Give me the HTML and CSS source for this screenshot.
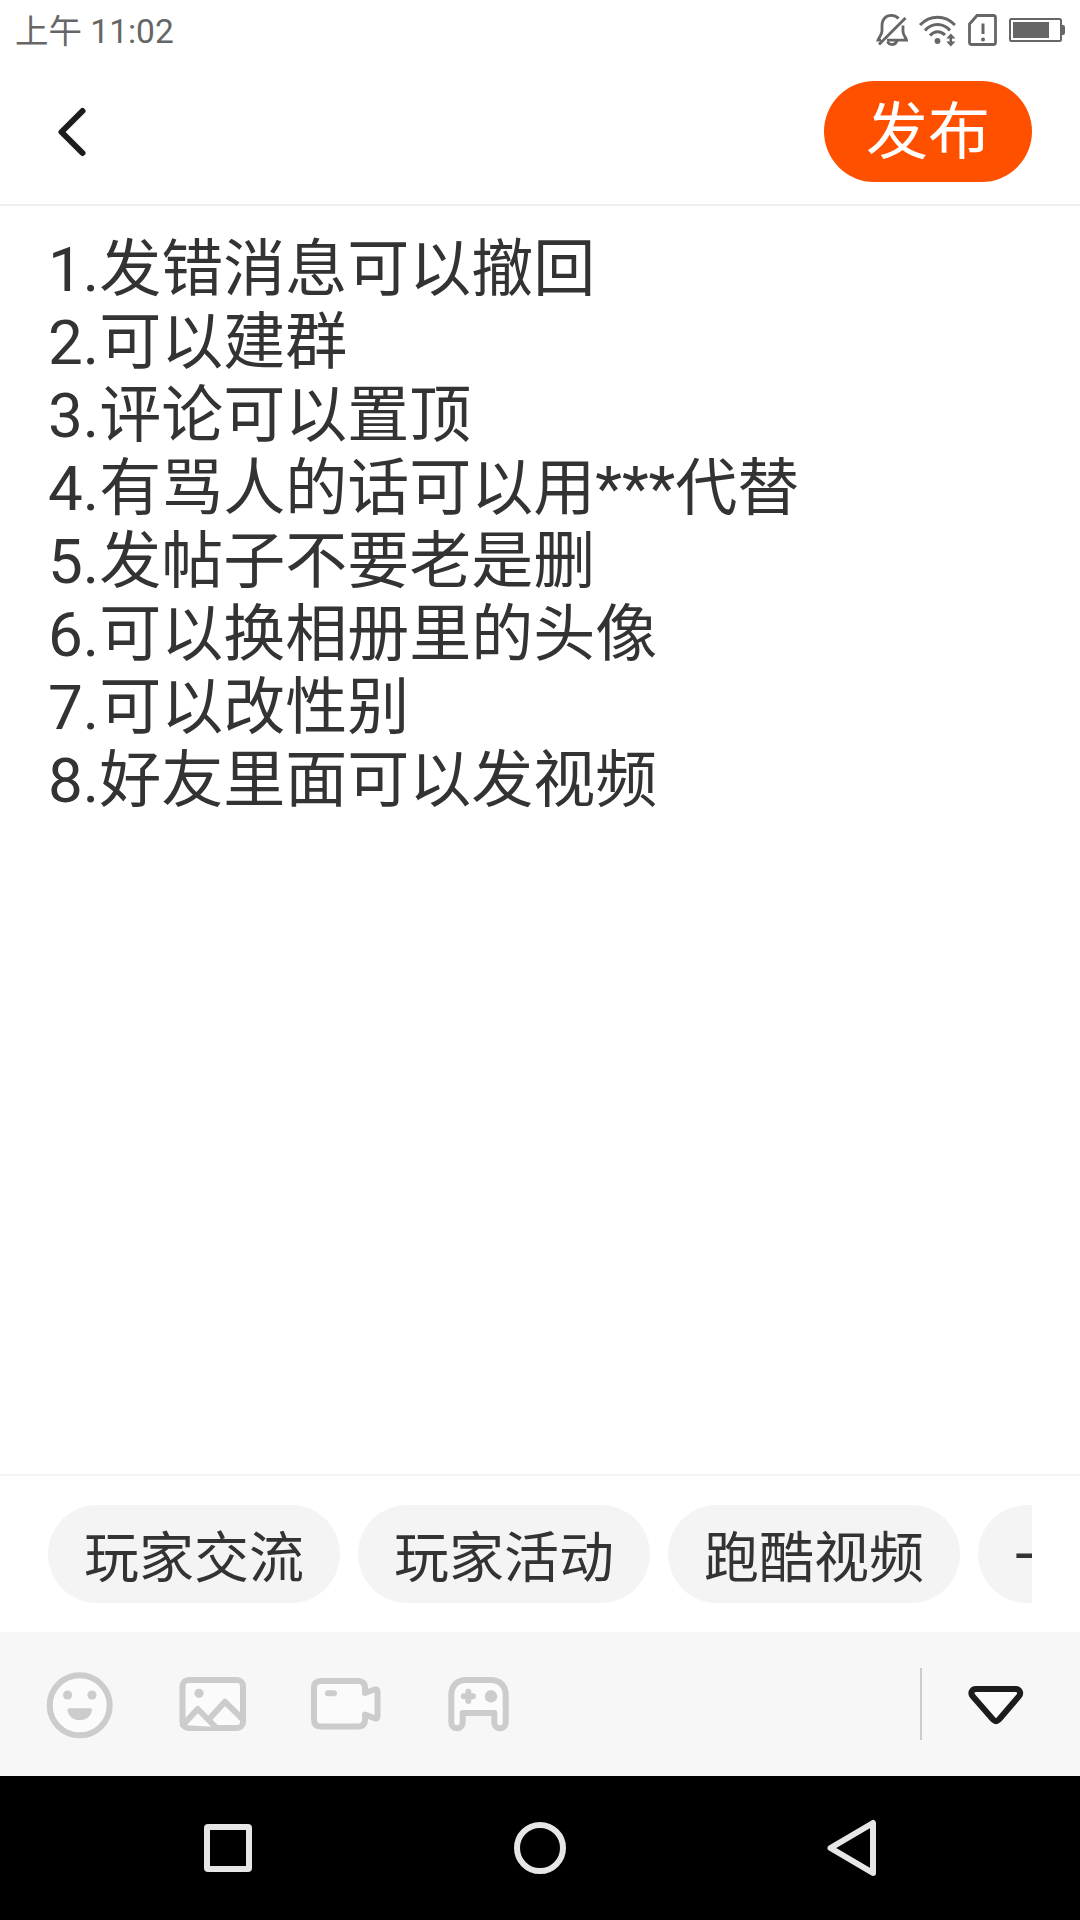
FILE: index.html
```html
<!DOCTYPE html>
<html lang="zh-CN">
<head>
  <meta charset="UTF-8" />
  <meta name="viewport" content="width=device-width, initial-scale=1.0"/>
  <title>发布</title>
  <link rel="stylesheet" href="styles.css">
</head>
<body>
  <div class="page">
    <div class="status-bar">
      <span class="time">上午 11:02</span>
      <div class="status-icons">
        <svg width="32" height="34" viewBox="0 0 32 34" fill="none" stroke="#666" stroke-width="2.8">
          <path d="M22.500 5.500C20 2.600 18.500 2.400 15.500 2.400 9.500 2.400 6 6.500 6 12.500V18c0 4-3 6-4 9.200h3M27 12.500v6c0 4 3 5.500 3.500 8.700H11"/>
          <path d="M3 31.500 29.500 5"/>
          <path d="M11.500 28.500c2 4.200 8 4.200 9.500-1"/>
        </svg>
        <svg class="wifi" width="38" height="34" viewBox="0 0 38 34" fill="none" stroke="#666" stroke-width="3">
          <path d="M2 12C12 1.500 27 1.500 37 12M7 17.500C14 9.500 25 9.500 32 17.500M12 22.500c4.500-5 10.500-5 15-.5"/>
          <circle cx="19.500" cy="28" r="2.900" fill="#666" stroke="none"/>
          <path d="M32.800 24v6.500" stroke-width="2.600"/>
          <path d="M28.200 25.500 32.800 20.500 37.500 25.500ZM28.200 28.500 32.800 33.500 37.500 28.500Z" fill="#666" stroke="none"/>
        </svg>
        <svg class="sim" width="29" height="34" viewBox="0 0 29 34" fill="none" stroke="#666" stroke-width="2.800">
          <path d="M9 2.500H25.500Q27.500 2.500 27.500 5V29.500Q27.500 31.500 25.500 31.500H3.500Q1.500 31.500 1.500 29.500V11Z"/>
          <path d="M15 10.500V21" stroke-width="3"/>
          <circle cx="15" cy="26.500" r="2" fill="#666" stroke="none"/>
        </svg>
        <svg class="battery" width="56" height="34" viewBox="0 0 56 34">
          <rect x="1" y="6" width="51" height="22" rx="1.500" fill="none" stroke="#666" stroke-width="2"/>
          <path d="M4 9H40V25H4ZM52 12h2q2 0 2 2v6q0 2-2 2h-2Z" fill="#666"/>
        </svg>
      </div>
    </div>

    <div class="header">
      <svg class="back" width="36" height="54" viewBox="0 0 36 54" fill="none" stroke="#1c1c1c" stroke-width="6" stroke-linecap="round" stroke-linejoin="round">
        <path d="M27.500 6 6.500 27 27.500 48"/>
      </svg>
      <button class="publish">发布</button>
    </div>

    <div class="content">
      <p>1.发错消息可以撤回</p>
      <p>2.可以建群</p>
      <p>3.评论可以置顶</p>
      <p>4.有骂人的话可以用***代替</p>
      <p>5.发帖子不要老是删</p>
      <p>6.可以换相册里的头像</p>
      <p>7.可以改性别</p>
      <p>8.好友里面可以发视频</p>
    </div>

    <div class="topics">
      <div class="topic-list">
        <span class="topic">玩家交流</span>
        <span class="topic">玩家活动</span>
        <span class="topic">跑酷视频</span>
        <span class="topic">一</span>
      </div>
    </div>

    <div class="toolbar">
      <div class="tools">
        <!-- emoji -->
        <svg class="tool" viewBox="0 0 72 72">
          <circle cx="35.700" cy="37.300" r="30"/>
          <g class="solid">
            <circle cx="23.600" cy="27" r="4.600"/>
            <circle cx="48" cy="27" r="4.600"/>
            <path d="M25.500 40.300H46q2 0 2 2C47 48.500 42 52.300 35.700 52.300S24.500 48.500 23.500 42.300q0-2 2-2Z"/>
          </g>
        </svg>
        <!-- picture -->
        <svg class="tool" viewBox="0 0 72 72">
          <rect x="5.500" y="12" width="60.500" height="48" rx="6"/>
          <path d="M6 57 20.700 41 38.500 59M33 50 48 33.800 66 51.500"/>
          <circle class="solid" cx="22" cy="25.300" r="4.600"/>
        </svg>
        <!-- video -->
        <svg class="tool" viewBox="0 0 72 72">
          <path d="M11 13H48q7 0 7 7V25L64.500 21.500Q67.500 20.500 67.500 24V48Q67.500 51.500 64.500 50.300L55 46.500V51.500q0 7-7 7H11q-7 0-7-7V20q0-7 7-7Z"/>
          <path d="M18 25.300h6"/>
        </svg>
        <!-- game -->
        <svg class="tool" viewBox="0 0 72 72">
          <path d="M8.300 27C8.300 17 15 12 23 12H48C56 12 62.700 17 62.700 27V54.500a5.700 5.700 0 0 1-11.400 0V45H19.700v9.500a5.700 5.700 0 0 1-11.400 0Z"/>
          <path d="M20.700 28.300h9.200M25.300 23.700v9.200"/>
          <circle class="solid" cx="48" cy="28.300" r="6.200"/>
        </svg>
      </div>
      <div class="divider"></div>
      <svg class="tool fold" viewBox="0 0 72 72">
        <path d="M16 21H55.500C59.700 21 61.500 25.200 59 28.200L39 51.500Q36 54.500 33 51.500L12.700 28.200C10 25.200 11.800 21 16 21Z"/>
      </svg>
    </div>

    <div class="nav-bar">
      <svg class="nav-icon" viewBox="0 0 60 60"><rect x="9" y="9" width="42" height="42" rx="1"/></svg>
      <svg class="nav-icon" viewBox="0 0 60 60"><circle cx="30" cy="30" r="23"/></svg>
      <svg class="nav-icon" viewBox="0 0 60 60"><path d="M51 5V55L8.500 30Z"/></svg>
    </div>
  </div>
</body>
</html>
```

FILE: styles.css
```css
* {
  box-sizing: border-box;
}
body {
  margin: 0;
  background: #fff;
  color: #333;
  font-family: Roboto, "Noto Sans CJK SC", sans-serif;
}
svg {
  display: block;
  flex-shrink: 0;
}
.page {
  width: 1080px;
  height: 1920px;
  display: flex;
  flex-direction: column;
  overflow: hidden;
}
.status-bar {
  height: 59px;
  padding: 13px 15px 0;
  display: flex;
  justify-content: space-between;
  color: #666;
}
.time {
  font-size: 33.5px;
  line-height: 37px;
}
.status-icons {
  display: flex;
}
.wifi {
  margin-left: 10px;
}
.sim, .battery {
  margin-left: 12px;
}
.header {
  height: 147px;
  padding: 0 48px 0 55px;
  display: flex;
  align-items: center;
  justify-content: space-between;
  border-bottom: 2px solid #eee;
}
.publish {
  width: 208px;
  height: 101px;
  padding: 3px 0 0;
  border: none;
  border-radius: 51px;
  background: #ff5000;
  color: #fff;
  font-family: inherit;
  font-size: 62px;
  line-height: 98px;
}
.content {
  flex: 1;
  padding: 27px 48px;
  font-size: 62px;
  line-height: 73px;
}
.content p {
  margin: 0;
}
.topics {
  height: 158px;
  padding: 29px 48px;
  border-top: 2px solid #f4f4f4;
}
.topic-list {
  display: flex;
  gap: 18px;
  overflow: hidden;
}
.topic {
  flex: 0 0 292px;
  height: 98px;
  padding: 4px 36px 0;
  border-radius: 49px;
  background: #f4f4f4;
  font-size: 55px;
  line-height: 98px;
}
.toolbar {
  height: 144px;
  padding: 0 48px 0 44px;
  display: flex;
  align-items: center;
  background: #f7f7f7;
}
.tools {
  flex: 1;
  display: flex;
  gap: 61px;
}
.tool {
  width: 72px;
  height: 72px;
  fill: #fbfbfb;
  stroke: #ccc;
  stroke-width: 6;
  stroke-linecap: round;
  stroke-linejoin: round;
}
.solid {
  fill: #ccc;
  stroke: none;
}
.divider {
  width: 2px;
  height: 72px;
  margin-right: 38px;
  background: #ccc;
}
.fold {
  stroke: #1c1c1c;
}
.nav-bar {
  height: 144px;
  padding: 0 198px;
  display: flex;
  align-items: center;
  justify-content: space-between;
  background: #000;
}
.nav-icon {
  width: 60px;
  height: 60px;
  fill: none;
  stroke: #e6e6e6;
  stroke-width: 6;
  stroke-linejoin: round;
}
```
